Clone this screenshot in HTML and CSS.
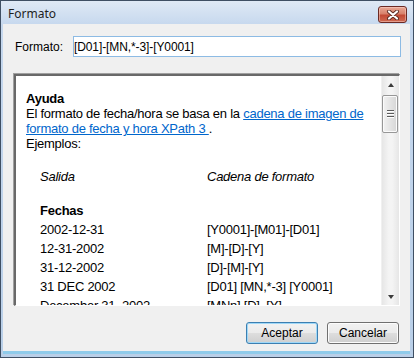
FILE: index.html
```html
<!DOCTYPE html>
<html lang="es">

<head>
    <meta charset="UTF-8">
    <meta name="viewport" content="width=device-width, initial-scale=1.0">
    <title>Formato</title>
    <link rel="stylesheet" href="styles.css">
</head>

<body>
    <div class="window">
        <div class="titlebar">
            <span class="title">Formato</span>
            <button class="close" aria-label="Cerrar">
                <svg width="14" height="10" viewBox="0 0 14 10">
                    <path d="M3 1.5 L11 8.5 M11 1.5 L3 8.5" stroke="#5a2a22" stroke-width="4" stroke-linecap="round" />
                    <path d="M3 1.5 L11 8.5 M11 1.5 L3 8.5" stroke="#ffffff" stroke-width="2.2" stroke-linecap="round" />
                </svg>
            </button>
        </div>

        <div class="content">
            <div class="form-row">
                <label class="label" for="formatInput">Formato:</label>
                <input class="input" id="formatInput" type="text" value="[D01]-[MN,*-3]-[Y0001]">
            </div>

            <div class="panel">
                <div class="help">
                    <div class="help-title">Ayuda</div>
                    <div>El formato de fecha/hora se basa en la <a href="#">cadena de imagen de formato de fecha y hora XPath 3 </a>.</div>
                    <div>Ejemplos:</div>

                    <table class="examples">
                        <tr class="head">
                            <td>Salida</td>
                            <td>Cadena de formato</td>
                        </tr>
                        <tr class="spacer">
                            <td></td>
                            <td></td>
                        </tr>
                        <tr class="group">
                            <td>Fechas</td>
                            <td></td>
                        </tr>
                        <tr>
                            <td>2002-12-31</td>
                            <td>[Y0001]-[M01]-[D01]</td>
                        </tr>
                        <tr>
                            <td>12-31-2002</td>
                            <td>[M]-[D]-[Y]</td>
                        </tr>
                        <tr>
                            <td>31-12-2002</td>
                            <td>[D]-[M]-[Y]</td>
                        </tr>
                        <tr>
                            <td>31 DEC 2002</td>
                            <td>[D01] [MN,*-3] [Y0001]</td>
                        </tr>
                        <tr>
                            <td>December 31, 2002</td>
                            <td>[MNn] [D], [Y]</td>
                        </tr>
                        <tr>
                            <td>31 December, 2002</td>
                            <td>[D] [MNn], [Y]</td>
                        </tr>
                    </table>
                </div>

                <div class="scrollbar">
                    <div class="arrow up"></div>
                    <div class="track">
                        <div class="thumb">
                            <span></span>
                            <span></span>
                            <span></span>
                        </div>
                    </div>
                    <div class="arrow down"></div>
                </div>
            </div>

            <div class="buttons">
                <button class="btn default">Aceptar</button>
                <button class="btn">Cancelar</button>
            </div>
        </div>
    </div>
</body>

</html>
```

FILE: styles.css
```css
body {
    margin: 0;
    font-family: "Liberation Sans", Arial, sans-serif;
}

.window {
    width: 414px;
    height: 358px;
    box-sizing: border-box;
    border: 1px solid #3f4f63;
    background: linear-gradient(#dfe9f5, #c6d8ee 24px, #b9cfe8);
    padding: 0 3px 3px 2px;
    display: flex;
    flex-direction: column;
}

.titlebar {
    height: 23px;
    display: flex;
    align-items: center;
    justify-content: space-between;
    padding-left: 5px;
    padding-right: 3px;
}

.title {
    font-family: "Noto Sans", "Open Sans", sans-serif;
    font-size: 12px;
    color: #1e1e1e;
    margin-top: 2px;
}

.close {
    width: 29px;
    height: 17px;
    margin-top: 4px;
    padding: 0;
    border: 1px solid #6b2a24;
    border-radius: 3px;
    background: linear-gradient(#e8a895, #d8826c 45%, #c24a35 55%, #cf6a52);
    box-shadow: inset 0 0 0 1px rgba(255, 220, 210, 0.45);
    display: flex;
    align-items: center;
    justify-content: center;
}

.content {
    flex: 1;
    background-color: #f0f0f0;
    border-bottom: 3px solid #8fcbea;
    padding: 0 9px 0 11px;
    display: flex;
    flex-direction: column;
}

.form-row {
    display: flex;
    align-items: center;
    margin-top: 12px;
    height: 21px;
}

.label {
    width: 58px;
    padding-left: 1px;
    font-size: 12px;
    color: #000;
}

.input {
    flex: 1;
    height: 21px;
    box-sizing: border-box;
    border: 1px solid #8dbbe4;
    padding: 0 0 0 0;
    font-family: "Liberation Sans", Arial, sans-serif;
    font-size: 12px;
    letter-spacing: -0.1px;
    color: #000;
    outline: none;
}

.panel {
    margin-top: 17px;
    margin-right: 1px;
    height: 232px;
    box-sizing: border-box;
    border-top: 2px solid #696969;
    border-left: 2px solid #696969;
    border-right: 1px solid #ffffff;
    border-bottom: 1px solid #ffffff;
    box-shadow: -1px -1px 0 #a0a0a0;
    background-color: #fff;
    display: flex;
    overflow: hidden;
}

.help {
    flex: 1;
    padding: 15px 0 0 10px;
    font-size: 13px;
    line-height: 15px;
    letter-spacing: -0.25px;
    color: #000;
    overflow: hidden;
}

.help-title {
    font-weight: bold;
}

.help a {
    color: #0066cc;
}

.examples {
    margin-top: 16px;
    margin-left: 14px;
    border-collapse: collapse;
}

.examples td {
    padding: 2px 0;
    height: 15px;
    white-space: nowrap;
}

.examples td:first-child {
    width: 167px;
}

.examples .head td {
    font-style: italic;
}

.examples .spacer td {
    height: 11px;
}

.examples .group td {
    font-weight: bold;
}

.scrollbar {
    width: 17px;
    display: flex;
    flex-direction: column;
    background: linear-gradient(90deg, #e6e6e6, #f4f4f4 40%, #f4f4f4 60%, #e6e6e6);
    border-left: 1px solid #f0f0f0;
}

.arrow {
    height: 17px;
    display: flex;
    align-items: center;
    justify-content: center;
}

.arrow::before {
    content: "";
    border-left: 3.5px solid transparent;
    border-right: 3.5px solid transparent;
}

.arrow.up::before {
    border-bottom: 4px solid #3c3c3c;
}

.arrow.down::before {
    border-top: 4px solid #3c3c3c;
}

.track {
    flex: 1;
    padding-top: 2px;
}

.thumb {
    height: 38px;
    margin: 0 1px 0 0;
    box-sizing: border-box;
    border: 1px solid #979797;
    border-radius: 2px;
    background: linear-gradient(90deg, #f2f2f2, #e4e4e4 50%, #d6d6d6);
    box-shadow: inset 0 0 0 1px #fbfbfb;
    display: flex;
    flex-direction: column;
    align-items: center;
    justify-content: center;
    gap: 1px;
}

.thumb span {
    width: 7px;
    height: 1px;
    background-color: #5a5a5a;
    border-bottom: 1px solid #ffffff;
}

.buttons {
    display: flex;
    justify-content: flex-end;
    gap: 9px;
    margin-top: 16px;
    margin-right: 2px;
}

.btn {
    width: 72px;
    height: 22px;
    border: 1px solid #707070;
    border-radius: 3px;
    background: linear-gradient(#f2f2f2, #ebebeb 48%, #dddddd 52%, #cfcfcf);
    box-shadow: inset 0 0 0 1px #fcfcfc;
    font-family: "Liberation Sans", Arial, sans-serif;
    font-size: 12px;
    color: #000;
    padding: 0;
}

.btn.default {
    border-color: #3c7fb1;
    box-shadow: inset 0 0 0 1px #9fd8f8;
}
```
